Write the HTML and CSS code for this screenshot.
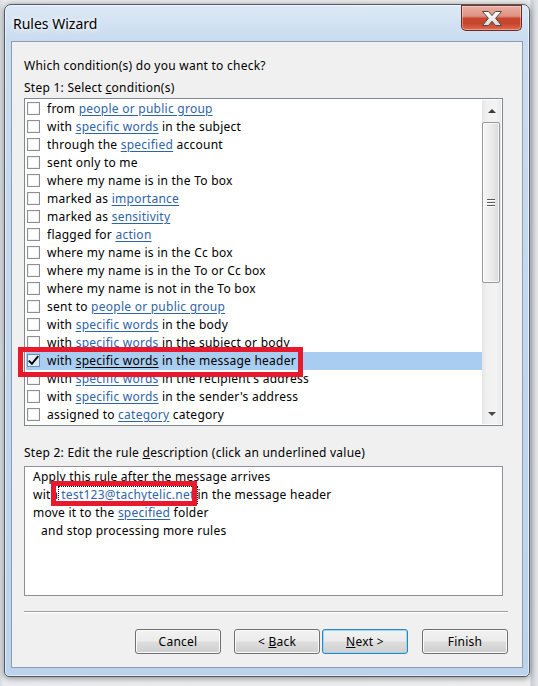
FILE: index.html
```html
<!DOCTYPE html>
<html>
<head>
<meta charset="utf-8">
<title>Rules Wizard</title>
<link rel="stylesheet" href="styles.css">
</head>
<body>
<div class="window">
  <div class="titlebar">
    <span class="title">Rules Wizard</span>
    <div class="close">
      <svg width="22" height="17" viewBox="0 0 22 17">
        <defs>
          <linearGradient id="xg" x1="0" y1="0" x2="0" y2="1">
            <stop offset="0" stop-color="#ffffff"/>
            <stop offset="1" stop-color="#dcdcdc"/>
          </linearGradient>
        </defs>
        <polygon points="1.5,1.5 7.5,1.5 11,5.6 14.5,1.5 20.5,1.5 14.6,8.3 20.5,15.5 14.5,15.5 11,11.2 7.5,15.5 1.5,15.5 7.4,8.3" fill="url(#xg)" stroke="#4b4b4b" stroke-width="1" stroke-linejoin="round"/>
      </svg>
    </div>
  </div>
  <div class="client">
    <p class="line q">Which condition(s) do you want to check?</p>
    <p class="line step1">Step 1: Select <span class="ak">c</span>ondition(s)</p>
    <div class="listbox">
      <div class="rows">
        <div class="row"><span class="cb"></span><span class="rt">from <span class="lnk">people or public group</span></span></div>
        <div class="row"><span class="cb"></span><span class="rt">with <span class="lnk">specific words</span> in the subject</span></div>
        <div class="row"><span class="cb"></span><span class="rt">through the <span class="lnk">specified</span> account</span></div>
        <div class="row"><span class="cb"></span><span class="rt">sent only to me</span></div>
        <div class="row"><span class="cb"></span><span class="rt">where my name is in the To box</span></div>
        <div class="row"><span class="cb"></span><span class="rt">marked as <span class="lnk">importance</span></span></div>
        <div class="row"><span class="cb"></span><span class="rt">marked as <span class="lnk">sensitivity</span></span></div>
        <div class="row"><span class="cb"></span><span class="rt">flagged for <span class="lnk">action</span></span></div>
        <div class="row"><span class="cb"></span><span class="rt">where my name is in the Cc box</span></div>
        <div class="row"><span class="cb"></span><span class="rt">where my name is in the To or Cc box</span></div>
        <div class="row"><span class="cb"></span><span class="rt">where my name is not in the To box</span></div>
        <div class="row"><span class="cb"></span><span class="rt">sent to <span class="lnk">people or public group</span></span></div>
        <div class="row"><span class="cb"></span><span class="rt">with <span class="lnk">specific words</span> in the body</span></div>
        <div class="row"><span class="cb"></span><span class="rt">with <span class="lnk">specific words</span> in the subject or body</span></div>
        <div class="row selected"><span class="cb on"><svg width="11" height="11" viewBox="0 0 11 11"><path d="M0.8 5.6 L3.9 8.9 L10.2 1.2" fill="none" stroke="#000" stroke-width="1.9"/></svg></span><span class="rt">with <span class="lnk">specific words</span> in the message header</span></div>
        <div class="row"><span class="cb"></span><span class="rt">with <span class="lnk">specific words</span> in the recipient's address</span></div>
        <div class="row"><span class="cb"></span><span class="rt">with <span class="lnk">specific words</span> in the sender's address</span></div>
        <div class="row"><span class="cb"></span><span class="rt">assigned to <span class="lnk">category</span> category</span></div>
      </div>
      <div class="scrollbar">
        <div class="sb-btn"><span class="arrow-up"></span></div>
        <div class="thumb"><span class="grip"></span><span class="grip"></span><span class="grip"></span></div>
        <div class="sb-track"></div>
        <div class="sb-btn"><span class="arrow-down"></span></div>
      </div>
    </div>
    <p class="line step2">Step 2: Edit the rule <span class="ak">d</span>escription (click an underlined value)</p>
    <div class="desc">
      <div class="dline">Apply this rule after the message arrives</div>
      <div class="dline">with<span class="focus"><span class="lnk">test123@tachytelic.net</span></span>in the message header</div>
      <div class="dline">move it to the <span class="lnk">specified</span> folder</div>
      <div class="dline indent">and stop processing more rules</div>
    </div>
    <div class="sep"></div>
    <div class="buttons">
      <div class="btn btn-cancel"><span>Cancel</span></div>
      <div class="btn btn-back"><span>&lt; <span class="ak">B</span>ack</span></div>
      <div class="btn btn-next default"><span><span class="ak">N</span>ext &gt;</span></div>
      <div class="btn btn-finish"><span>Finish</span></div>
    </div>
  </div>
</div>
<div class="mark mark-row"></div>
<div class="mark mark-email"></div>
</body>
</html>
```
FILE: styles.css
```css
* { box-sizing: border-box; }
html, body { margin: 0; }
body {
  width: 538px;
  height: 686px;
  overflow: hidden;
  position: relative;
  padding: 4px 0 0 4px;
  background: linear-gradient(to right, #d9dde2 0, #e9ebee 4px, #eeeeee 530px, #c9ced4 531px, #e4e6e9 538px);
  font-family: "Noto Sans", "Open Sans", sans-serif;
  font-size: 12px;
  letter-spacing: 0.25px;
  color: #000;
}
.window {
  width: 526px;
  height: 673px;
  border: 1px solid #4f5a66;
  border-radius: 7px 7px 5px 5px;
  background: linear-gradient(180deg, #dde9f6 0%, #cadcf0 5%, #c2d7ee 50%, #bcd3ec 100%);
  box-shadow: 0 1px 6px rgba(0,0,0,0.45), inset 0 0 0 1px rgba(255,255,255,0.55);
  display: flex;
  flex-direction: column;
  padding: 0 6px 8px 6px;
}
.titlebar {
  height: 36px;
  flex: none;
  display: flex;
  align-items: flex-start;
  padding: 0 1px 0 2px;
}
.title {
  margin-top: 9px;
  font-size: 14px;
  line-height: 20px;
  letter-spacing: 0;
  color: #000;
  text-shadow: 0 0 9px rgba(255,255,255,0.95), 0 0 4px #ffffff;
}
.close {
  margin-left: auto;
  width: 61px;
  height: 26px;
  border: 1px solid #6d2a22;
  border-top-color: #7c3329;
  border-radius: 0 0 5px 5px;
  background: linear-gradient(180deg, #eab0a2 0%, #de9282 42%, #c8462f 52%, #c6432c 72%, #de6a4f 100%);
  box-shadow: inset 0 0 0 1px rgba(255,255,255,0.35);
  display: flex;
  align-items: center;
  justify-content: center;
}
.close svg { display: block; }
.client {
  flex: 1;
  background: #f0f0f0;
  border: 1px solid #8d9cae;
  padding: 15px 14px 13px 12px;
  display: flex;
  flex-direction: column;
}
.line {
  margin: 0;
  height: 18px;
  line-height: 18px;
  white-space: nowrap;
}
.step1 { margin-top: 4px; }
.ak { text-decoration: underline; }
.listbox {
  margin-top: 1px;
  width: 479px;
  height: 328px;
  flex: none;
  border: 1px solid #828790;
  background: #ffffff;
  padding: 1px;
  display: flex;
}
.rows { flex: 1; }
.row {
  height: 18px;
  line-height: 18px;
  display: flex;
  align-items: flex-start;
  padding-left: 1px;
  white-space: nowrap;
}
.rt { white-space: pre; }
.row.selected { background: #a9cdf0; }
.lnk {
  color: #2f64a8;
  text-decoration: underline;
  text-underline-offset: 2px;
}
.selected .lnk { color: #000; }
.cb {
  flex: none;
  width: 13px;
  height: 13px;
  margin-top: 2px;
  margin-right: 7px;
  border: 1px solid #8e8f8f;
  background: #ffffff;
  box-shadow: inset 0 0 0 1px #f1f1f1;
  display: flex;
  align-items: center;
  justify-content: center;
}
.cb.on {
  border-color: #6f8db0;
  background: linear-gradient(135deg, #eaf4fe, #d3e7fa);
  box-shadow: none;
}
.cb svg { display: block; overflow: visible; }
.scrollbar {
  width: 19px;
  flex: none;
  display: flex;
  flex-direction: column;
  background: linear-gradient(to right, #e6e6e6 0%, #f1f1f1 25%, #f3f3f3 75%, #e9e9e9 100%);
}
.sb-btn {
  height: 21px;
  flex: none;
  display: flex;
  align-items: center;
  justify-content: center;
}
.arrow-up {
  width: 0; height: 0;
  border-left: 4px solid transparent;
  border-right: 4px solid transparent;
  border-bottom: 4px solid #3d3d3d;
}
.arrow-down {
  width: 0; height: 0;
  border-left: 4px solid transparent;
  border-right: 4px solid transparent;
  border-top: 4px solid #4a4a4a;
}
.thumb {
  margin: 1px 1px 0 0;
  height: 161px;
  flex: none;
  border: 1px solid #979797;
  border-radius: 2px;
  background: linear-gradient(to right, #f6f6f6 0%, #ededed 45%, #dadada 100%);
  box-shadow: inset 0 0 0 1px rgba(255,255,255,0.75);
  display: flex;
  flex-direction: column;
  align-items: center;
  justify-content: center;
  gap: 1px;
}
.grip {
  width: 8px;
  height: 2px;
  border-top: 1px solid #5a5a5a;
  border-bottom: 1px solid #ffffff;
}
.sb-track { flex: 1; }
.step2 { margin-top: 18px; }
.desc {
  margin-top: 4px;
  width: 479px;
  height: 130px;
  flex: none;
  border: 1px solid #8e9197;
  background: #ffffff;
  padding: 1px 8px;
}
.dline {
  height: 18px;
  line-height: 18px;
  white-space: nowrap;
}
.indent { padding-left: 8px; }
.focus {
  display: inline-block;
  height: 18px;
  vertical-align: top;
  padding: 0 3px 0 3px;
  outline: 1px dotted #000;
  outline-offset: -1px;
}
.sep {
  margin-top: 15px;
  width: 484px;
  height: 2px;
  flex: none;
  border-top: 1px solid #a0a0a0;
  border-bottom: 1px solid #ffffff;
}
.buttons {
  margin-top: 16px;
  display: flex;
  justify-content: flex-end;
  width: 484px;
}
.btn {
  width: 86px;
  height: 25px;
  border: 1px solid #707070;
  border-radius: 3px;
  background: linear-gradient(180deg, #f2f2f2 0%, #ebebeb 48%, #dddddd 52%, #cfcfcf 100%);
  box-shadow: inset 0 0 0 1px #fbfbfb;
  display: flex;
  align-items: center;
  justify-content: center;
  white-space: pre;
}
.btn-back { margin-left: 13px; }
.btn-next { margin-left: 2px; }
.btn-finish { margin-left: 14px; }
.btn.default {
  border-color: #3c7fb1;
  box-shadow: inset 0 0 0 1px #8fdcfb;
}
.mark {
  position: absolute;
  border: 5px solid #e8192c;
}
.mark-row { left: 18px; top: 347px; width: 285px; height: 30px; }
.mark-email { left: 51px; top: 481px; width: 146px; height: 25px; }
```
